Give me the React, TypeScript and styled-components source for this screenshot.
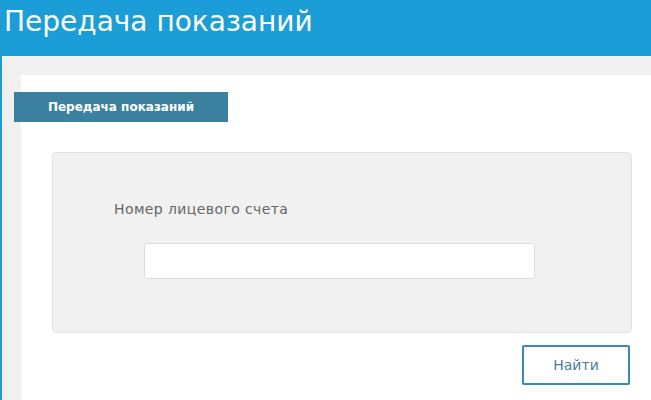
import styled, { createGlobalStyle } from "styled-components";

const GlobalStyle = createGlobalStyle`
  body {
    margin: 0;
    background: #ffffff;
    font-family: "DejaVu Sans", "Open Sans", sans-serif;
  }
`

export default function App() {
    return (
        <>
            <GlobalStyle/>
            <Header>Передача показаний</Header>
            <Body>
                <Content>
                    <Tab>Передача показаний</Tab>
                    <Panel>
                        <Label>Номер лицевого счета</Label>
                        <Input type="text"/>
                    </Panel>
                    <Actions>
                        <FindButton>Найти</FindButton>
                    </Actions>
                </Content>
            </Body>
        </>
    )
}

const Header = styled.div`
  height: 56px;
  background-color: #1b9ed8;
  color: #ffffff;
  font-size: 28px;
  line-height: 44px;
  padding-left: 4px;
  box-sizing: border-box;
`
const Body = styled.div`
  display: flex;
  height: 344px;
  background-color: #f0f0f0;
  border-left: 2px solid #1b9ed8;
  padding: 19px 0 0 19px;
  box-sizing: border-box;
`
const Content = styled.div`
  flex: 1;
  background-color: #ffffff;
  padding-top: 17px;
`
const Tab = styled.div`
  width: 214px;
  height: 30px;
  margin-left: -7px;
  background-color: #3c80a0;
  color: #ffffff;
  font-weight: 700;
  font-size: 12px;
  display: flex;
  align-items: center;
  justify-content: center;
`
const Panel = styled.div`
  margin: 30px 0 0 31px;
  width: 580px;
  height: 181px;
  box-sizing: border-box;
  background-color: #f1f1f1;
  border: 1px solid #e4e4e4;
  border-radius: 4px;
  padding: 46px 0 0 61px;
`
const Label = styled.div`
  font-size: 14px;
  letter-spacing: 0.4px;
  color: #666666;
  line-height: 20px;
`
const Input = styled.input`
  display: block;
  margin: 24px 0 0 30px;
  width: 391px;
  height: 36px;
  box-sizing: border-box;
  background: #ffffff;
  border: 1px solid #dddddd;
  border-radius: 3px;
  outline: none;
`
const Actions = styled.div`
  display: flex;
  justify-content: flex-end;
  width: 611px;
  margin-top: 12px;
  padding-right: 2px;
  box-sizing: border-box;
`
const FindButton = styled.button`
  width: 108px;
  height: 40px;
  background: #ffffff;
  border: 2px solid #3a8ab0;
  border-radius: 2px;
  color: #4a7c9e;
  font-family: "DejaVu Sans", sans-serif;
  font-size: 14px;
`
